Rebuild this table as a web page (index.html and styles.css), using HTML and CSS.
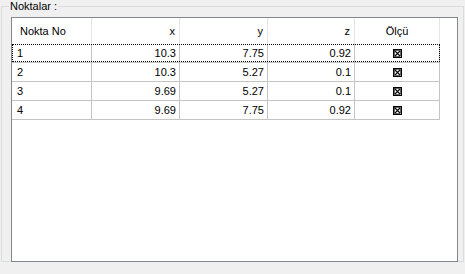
FILE: index.html
```html
<!DOCTYPE html>
<html lang="tr">
<head>
    <meta charset="UTF-8">
    <title>Noktalar</title>
    <link rel="stylesheet" href="styles.css">
</head>
<body>
<fieldset class="group">
    <legend>Noktalar :</legend>

    <div class="grid">
        <table class="points">
            <colgroup>
                <col class="c-no">
                <col class="c-x">
                <col class="c-y">
                <col class="c-z">
                <col class="c-olcu">
            </colgroup>
            <thead>
                <tr>
                    <th class="left">Nokta No</th>
                    <th>x</th>
                    <th>y</th>
                    <th>z</th>
                    <th class="center">Ölçü</th>
                </tr>
            </thead>
            <tbody>
                <tr class="current">
                    <td class="left">1</td>
                    <td>10.3</td>
                    <td>7.75</td>
                    <td>0.92</td>
                    <td class="center">
                        <svg class="check" width="9" height="9" viewBox="0 0 9 9"><rect x="0.5" y="0.5" width="8" height="8" fill="none" stroke="#000" stroke-width="1" shape-rendering="crispEdges"/><rect x="1.5" y="1.5" width="6" height="6" fill="none" stroke="#000" stroke-width="0.6"/><path d="M2 2L7 7M7 2L2 7" stroke="#000" stroke-width="1.1"/></svg>
                    </td>
                </tr>
                <tr>
                    <td class="left">2</td>
                    <td>10.3</td>
                    <td>5.27</td>
                    <td>0.1</td>
                    <td class="center">
                        <svg class="check" width="9" height="9" viewBox="0 0 9 9"><rect x="0.5" y="0.5" width="8" height="8" fill="none" stroke="#000" stroke-width="1" shape-rendering="crispEdges"/><rect x="1.5" y="1.5" width="6" height="6" fill="none" stroke="#000" stroke-width="0.6"/><path d="M2 2L7 7M7 2L2 7" stroke="#000" stroke-width="1.1"/></svg>
                    </td>
                </tr>
                <tr>
                    <td class="left">3</td>
                    <td>9.69</td>
                    <td>5.27</td>
                    <td>0.1</td>
                    <td class="center">
                        <svg class="check" width="9" height="9" viewBox="0 0 9 9"><rect x="0.5" y="0.5" width="8" height="8" fill="none" stroke="#000" stroke-width="1" shape-rendering="crispEdges"/><rect x="1.5" y="1.5" width="6" height="6" fill="none" stroke="#000" stroke-width="0.6"/><path d="M2 2L7 7M7 2L2 7" stroke="#000" stroke-width="1.1"/></svg>
                    </td>
                </tr>
                <tr>
                    <td class="left">4</td>
                    <td>9.69</td>
                    <td>7.75</td>
                    <td>0.92</td>
                    <td class="center">
                        <svg class="check" width="9" height="9" viewBox="0 0 9 9"><rect x="0.5" y="0.5" width="8" height="8" fill="none" stroke="#000" stroke-width="1" shape-rendering="crispEdges"/><rect x="1.5" y="1.5" width="6" height="6" fill="none" stroke="#000" stroke-width="0.6"/><path d="M2 2L7 7M7 2L2 7" stroke="#000" stroke-width="1.1"/></svg>
                    </td>
                </tr>
            </tbody>
        </table>
    </div>
</fieldset>
</body>
</html>
```

FILE: styles.css
```css
/* General */
body {
    margin: 0;
    background-color: #f0f0f0;
    font-family: "Liberation Sans", Arial, sans-serif;
    font-size: 11px;
    color: #000;
}

/* Group box */
.group {
    margin: 0 1px;
    padding: 0;
    height: 260px;
    border: 1px solid #dcdcdc;
}

.group legend {
    margin-left: 7px;
    padding: 0 1px;
    line-height: 13px;
}

/* Data grid */
.grid {
    margin: 4px 0 0 9px;
    width: 445px;
    height: 243px;
    border: 1px solid #828790;
    background-color: #fff;
}

.points {
    table-layout: fixed;
    border-collapse: separate;
    border-spacing: 0;
    width: 428px;
}

.c-no { width: 80px; }
.c-x { width: 88px; }
.c-y { width: 88px; }
.c-z { width: 87px; }
.c-olcu { width: 85px; }

.points th {
    height: 26px;
    padding: 0 4px 0 8px;
    font-weight: normal;
    text-align: right;
    border-right: 1px solid #e5e5e5;
    box-sizing: border-box;
}

.points td {
    height: 19px;
    padding: 0 3px 0 5px;
    text-align: right;
    border-right: 1px solid #c4c4c4;
    border-bottom: 1px solid #c4c4c4;
    box-sizing: border-box;
    white-space: nowrap;
}

.points .left { text-align: left; }
.points .center { text-align: center; padding: 0; }

/* Focused row: dotted rectangle across the whole row */
.points tr.current td:first-child {
    position: relative;
}

.points tr.current td:first-child::after {
    content: "";
    position: absolute;
    left: 0;
    top: 0;
    width: 428px;
    height: 18px;
    box-sizing: border-box;
    border: 1px dotted #000;
    pointer-events: none;
}

/* Checked box glyph */
.check {
    display: inline-block;
    vertical-align: -1px;
}
```
